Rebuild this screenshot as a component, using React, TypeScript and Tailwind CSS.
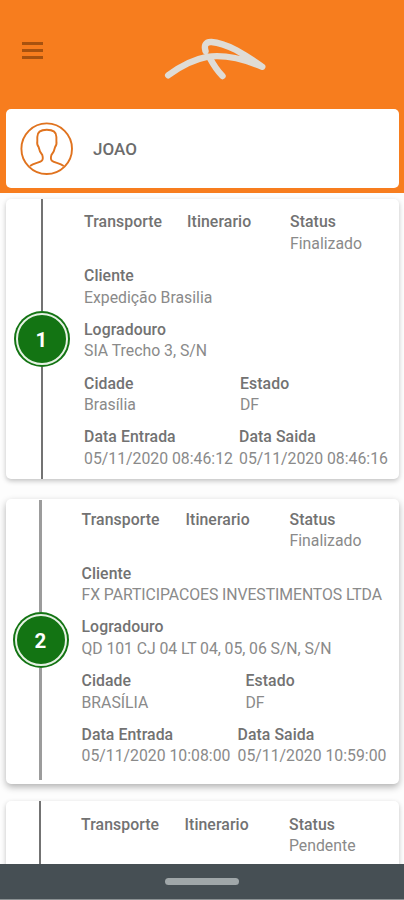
import { clsx } from 'clsx';

type Stop = {
  id: number;
  status: string;
  client: string;
  address: string;
  city: string;
  state: string;
  arrival: string;
  departure: string;
};

const stops: Stop[] = [
  {
    id: 1,
    status: 'Finalizado',
    client: 'Expedição Brasilia',
    address: 'SIA Trecho 3, S/N',
    city: 'Brasília',
    state: 'DF',
    arrival: '05/11/2020 08:46:12',
    departure: '05/11/2020 08:46:16',
  },
  {
    id: 2,
    status: 'Finalizado',
    client: 'FX PARTICIPACOES INVESTIMENTOS LTDA',
    address: 'QD 101 CJ 04 LT 04, 05, 06 S/N, S/N',
    city: 'BRASÍLIA',
    state: 'DF',
    arrival: '05/11/2020 10:08:00',
    departure: '05/11/2020 10:59:00',
  },
];

// Spacing differs slightly from one card to the next
const layouts = [
  {
    card: 'h-[280px] shadow-[0_2px_5px_rgba(0,0,0,0.24)]',
    rail: 'ml-[7px] pb-0',
    line: 'w-[2px] bg-[#737373]',
    body: 'pl-[14px] pt-[12.3px]',
    top: 'grid-cols-[103px_103px_1fr]',
    city: 'grid-cols-[156px_1fr]',
    dates: 'grid-cols-[155px_1fr]',
    value: '',
  },
  {
    card: 'h-[285px] mt-[20px] shadow-[0_3px_7px_rgba(0,0,0,0.3)]',
    rail: 'ml-[6px] pt-px pb-1',
    line: 'w-[3px] bg-[#9c9c9c]',
    body: 'pl-[12.5px] pt-[9.8px]',
    top: 'grid-cols-[104px_104px_1fr]',
    city: 'grid-cols-[164px_1fr]',
    dates: 'grid-cols-[156px_1fr]',
    value: 'tracking-[-0.07px]',
  },
];

const cardClass = 'mx-1.5 w-[393px] flex rounded-[5px] bg-white';

function Field({ label, value, className }: { label: string; value?: string; className?: string }) {
  return (
    <div className="h-[42.8px] whitespace-nowrap">
      <div className="font-medium text-[#727272] leading-[21.4px] tracking-[0.08px]">{label}</div>
      {value && <div className={clsx('text-[#8a8a8a] leading-[21.4px]', className)}>{value}</div>}
    </div>
  );
}

function StopCard({ stop, index }: { stop: Stop; index: number }) {
  const layout = layouts[index];

  return (
    <article className={clsx(cardClass, layout.card)}>
      <div className={clsx('w-[57px] shrink-0 flex flex-col items-center', layout.rail)}>
        <div className={clsx('flex-1', layout.line)} />
        <div className="size-[56px] shrink-0 rounded-full bg-[#137413] p-[2px]">
          <div className="size-full rounded-full border-2 border-[#e6f2e4] flex items-center justify-center pt-[3px] text-[20.5px] font-bold text-white">
            {stop.id}
          </div>
        </div>
        <div className={clsx('flex-1', layout.line)} />
      </div>
      <div className={clsx('flex-1 flex flex-col gap-[11px]', layout.body)}>
        <div className={clsx('grid', layout.top)}>
          <Field label="Transporte" />
          <Field label="Itinerario" />
          <Field label="Status" value={stop.status} />
        </div>
        <Field label="Cliente" value={stop.client} className={layout.value} />
        <Field label="Logradouro" value={stop.address} className={layout.value} />
        <div className={clsx('grid', layout.city)}>
          <Field label="Cidade" value={stop.city} />
          <Field label="Estado" value={stop.state} />
        </div>
        <div className={clsx('grid', layout.dates)}>
          <Field label="Data Entrada" value={stop.arrival} />
          <Field label="Data Saida" value={stop.departure} />
        </div>
      </div>
    </article>
  );
}

function Logo() {
  return (
    <svg
      width="106"
      height="44"
      viewBox="0 0 106 44"
      fill="none"
      stroke="#dfdcd6"
      strokeWidth="6.4"
      strokeLinecap="round"
      strokeLinejoin="round"
      className="ml-[119px] mt-[37px]"
    >
      <path d="M6.200 38.300C17 30 31 22.500 45 19.800C61 17.500 82 22 100.300 29.800C91 23 83 18 74 13C64 8 57 5.500 49.500 5C43 4.700 42 9 43.500 14" />
      <path d="M47.500 20.500C51 27 55.500 34 60.500 39" />
    </svg>
  );
}

function Avatar() {
  return (
    <svg width="54" height="54" viewBox="0 0 54 54" fill="none" stroke="#e0731f" strokeWidth="1.9">
      <circle cx="26.700" cy="26.700" r="25.300" />
      <path d="M10 44C14 41 19 41 21.500 39C23.500 37.500 22.900 35 22.300 33C20.300 31 19.300 28.500 18.600 25C17.200 23.500 17 21 17.300 19V15C17.300 10.500 20.500 7.800 26.800 7.800C33 7.800 36.400 10.500 36.400 15V19C36.700 21 36.500 23.500 35.100 25C34.400 28.500 33.400 31 31.400 33C30.800 35 30.200 37.500 32.200 39C34.700 41 39.700 41 43.700 44" />
    </svg>
  );
}

export default function App() {
  return (
    <div className="h-[900px] w-[404px] overflow-hidden flex flex-col bg-[#fdfdfd] font-['Roboto',sans-serif] text-[15.8px]">
      <header className="h-[193px] shrink-0 bg-[#f77d1e]">
        <div className="h-[109px] flex items-start">
          <button className="ml-[21.5px] mt-[42px] w-[21px] h-[17px] flex flex-col justify-between" aria-label="Menu">
            <span className="h-[3px] w-full bg-[#a8520f]" />
            <span className="h-[3px] w-full bg-[#a8520f]" />
            <span className="h-[3px] w-full bg-[#a8520f]" />
          </button>
          <Logo />
        </div>
        <div className="mx-1.5 w-[393px] h-[79px] rounded-[5px] bg-white flex items-center pl-[14px] gap-[19px]">
          <Avatar />
          <span className="pt-[2px] font-medium text-[#6c6c6c] text-[17px]">JOAO</span>
        </div>
      </header>

      <main className="flex-1 min-h-0 overflow-hidden pt-[6px]">
        {stops.map((stop, i) => (
          <StopCard key={stop.id} stop={stop} index={i} />
        ))}
        <article className={clsx(cardClass, 'h-[280px] mt-[17px] shadow-[0_2px_5px_rgba(0,0,0,0.24)]')}>
          <div className="ml-[33px] w-[2px] bg-[#737373]" />
          <div className="pl-[40px] pt-[12.6px] grid grid-cols-[103.5px_104.5px_1fr]">
            <Field label="Transporte" />
            <Field label="Itinerario" />
            <Field label="Status" value="Pendente" />
          </div>
        </article>
      </main>

      <footer className="h-[36px] shrink-0 bg-[#464f54] flex items-center justify-center border-b border-[#8b9193]">
        <div className="w-[74px] h-[7px] rounded-full bg-[#a0a7a9]" />
      </footer>
    </div>
  );
}
